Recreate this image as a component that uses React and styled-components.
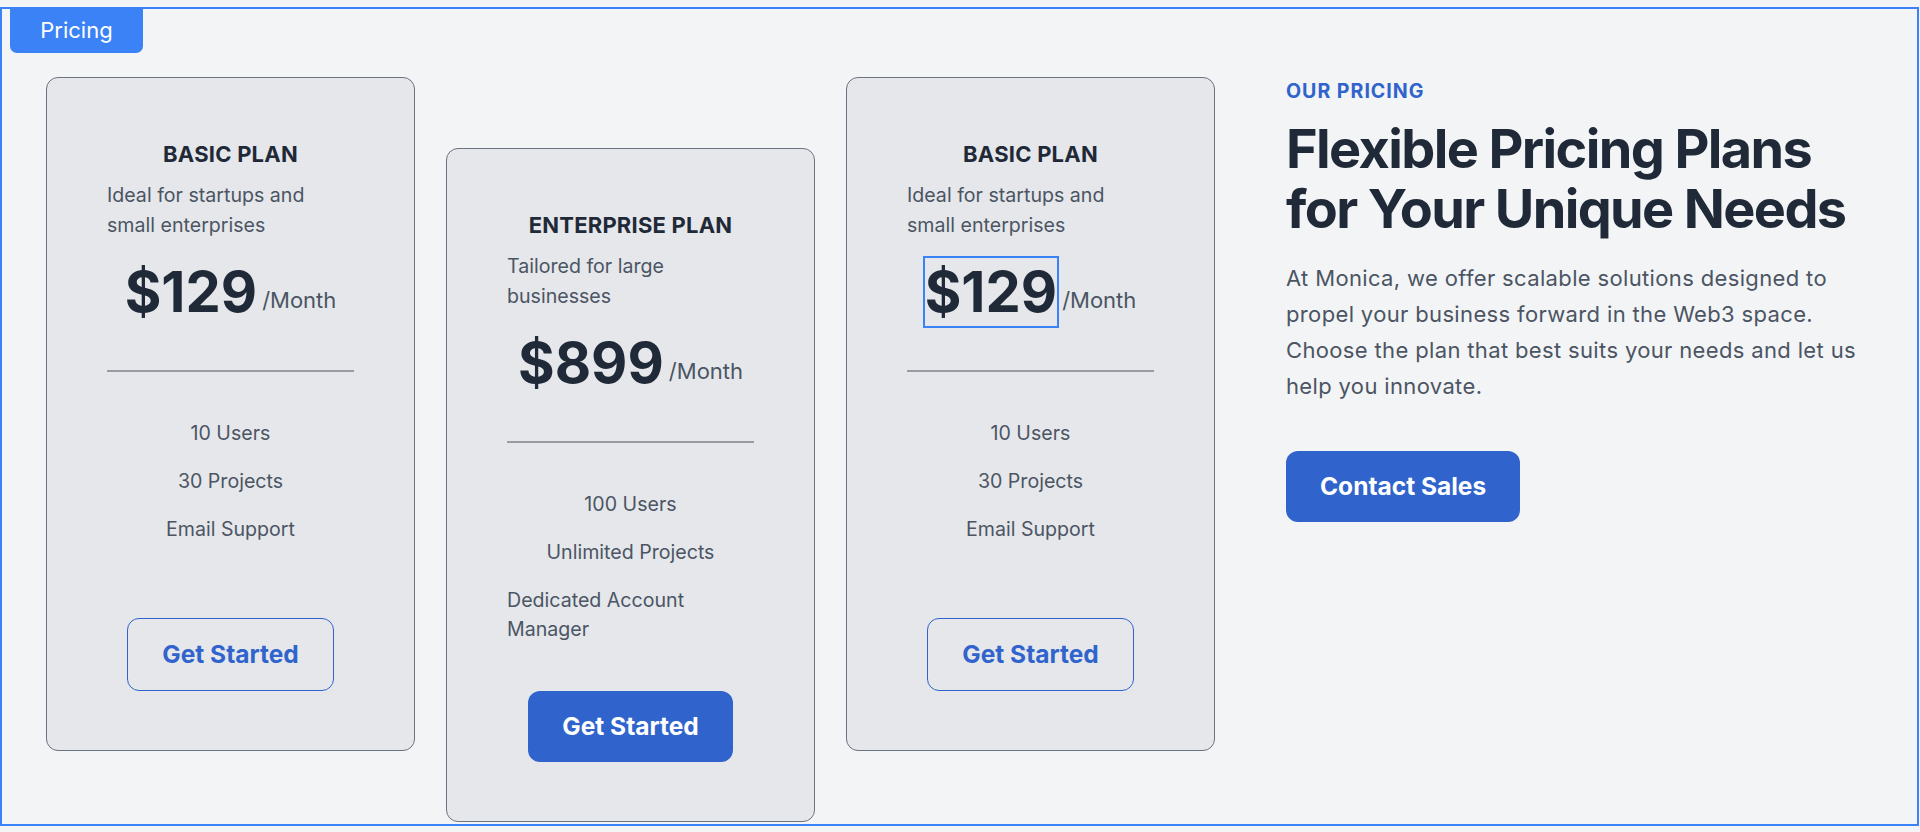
import React from "react";
import styled, { createGlobalStyle } from "styled-components";

const GlobalStyle = createGlobalStyle`
  * {
    box-sizing: border-box;
  }
  body {
    margin: 0;
    background: #f3f4f6;
    font-family: Inter, "Liberation Sans", Arial, sans-serif;
    color: #1f2937;
  }
`;

const Page = styled.div`
  height: 832px;
  padding: 7px 1px 6px 0;
  overflow: hidden;
`;

const Frame = styled.section`
  position: relative;
  height: 100%;
  border: 2px solid #3b82f6;
  padding: 68px 0 0 44px;
  display: flex;
  align-items: flex-start;
  overflow: hidden;
`;

const Tab = styled.div`
  position: absolute;
  top: -2px;
  left: 8px;
  width: 133px;
  height: 46px;
  background: #3b82f6;
  color: #ffffff;
  border-radius: 0 0 7px 7px;
  display: flex;
  align-items: center;
  justify-content: center;
  font-size: 22px;
`;

const Cards = styled.div`
  display: flex;
  gap: 31px;
  align-items: flex-start;
`;

const Card = styled.div`
  width: 369px;
  height: 674px;
  margin-top: ${(p) => (p.$offset ? "71px" : "0")};
  background: #e5e7eb;
  border: 1px solid #6b7280;
  border-radius: 12px;
  padding: 60px 60px 59px;
  display: flex;
  flex-direction: column;
  align-items: center;
`;

const PlanName = styled.h3`
  margin: 0 0 9px;
  font-size: 22px;
  line-height: 33px;
  font-weight: 700;
  letter-spacing: 0.01em;
  text-transform: uppercase;
  color: #1f2937;
`;

const PlanText = styled.p`
  margin: 0 0 18px;
  font-size: 19.6px;
  line-height: 30px;
  color: #4b5563;
`;

const PriceRow = styled.div`
  display: flex;
  align-items: flex-end;
  margin-bottom: 44px;
`;

const Price = styled.span`
  display: inline-block;
  font-size: 56px;
  line-height: 68px;
  font-weight: 700;
  color: #1f2937;
  outline: ${(p) => (p.$selected ? "2px solid #3b82f6" : "none")};
`;

const Per = styled.span`
  margin: 0 0 9px 5px;
  font-size: 22px;
  line-height: 33px;
  color: #4b5563;
`;

const Divider = styled.hr`
  align-self: stretch;
  height: 2px;
  margin: 0 0 47px;
  border: 0;
  background: #9a9ca3;
`;

const Features = styled.ul`
  list-style: none;
  margin: 0;
  padding: 0;
  display: flex;
  flex-direction: column;
  align-items: center;
  gap: 18.5px;
`;

const Feature = styled.li`
  font-size: 19.6px;
  line-height: 29.4px;
  color: #4b5563;
`;

const Button = styled.button`
  margin-top: ${(p) => (p.$pushed ? "auto" : "0")};
  padding: 17px 34px;
  border-radius: 12px;
  border: ${(p) => (p.$outline ? "1px solid #3064cc" : "0")};
  background: ${(p) => (p.$outline ? "transparent" : "#3064cc")};
  color: ${(p) => (p.$outline ? "#3064cc" : "#ffffff")};
  font-family: inherit;
  font-size: 24.5px;
  line-height: 36.7px;
  font-weight: 700;
  cursor: pointer;
`;

const Intro = styled.div`
  width: 592px;
  margin-left: 71px;
  display: flex;
  flex-direction: column;
  align-items: flex-start;
`;

const Eyebrow = styled.span`
  margin-bottom: 13px;
  font-size: 19.6px;
  line-height: 29.4px;
  font-weight: 700;
  letter-spacing: 0.05em;
  color: #3064cc;
`;

const Heading = styled.h2`
  margin: 0 0 23px;
  font-size: 54px;
  line-height: 59.4px;
  font-weight: 700;
  letter-spacing: -0.03em;
  color: #1f2937;
`;

const Lead = styled.p`
  margin: 0 0 47px;
  font-size: 22px;
  line-height: 35.8px;
  letter-spacing: 0.016em;
  color: #4b5563;
`;

const plans = [
  {
    name: "Basic Plan",
    text: "Ideal for startups and small enterprises",
    price: "$129",
    features: ["10 Users", "30 Projects", "Email Support"],
  },
  {
    name: "Enterprise Plan",
    text: "Tailored for large businesses",
    price: "$899",
    features: ["100 Users", "Unlimited Projects", "Dedicated Account Manager"],
    featured: true,
  },
  {
    name: "Basic Plan",
    text: "Ideal for startups and small enterprises",
    price: "$129",
    features: ["10 Users", "30 Projects", "Email Support"],
    selected: true,
  },
];

const App = () => {
  return (
    <Page>
      <GlobalStyle />
      <Frame>
        <Tab>Pricing</Tab>
        <Cards>
          {plans.map((plan, i) => (
            <Card key={i} $offset={plan.featured}>
              <PlanName>{plan.name}</PlanName>
              <PlanText>{plan.text}</PlanText>
              <PriceRow>
                <Price $selected={plan.selected}>{plan.price}</Price>
                <Per>/Month</Per>
              </PriceRow>
              <Divider />
              <Features>
                {plan.features.map((f) => (
                  <Feature key={f}>{f}</Feature>
                ))}
              </Features>
              <Button $pushed $outline={!plan.featured}>
                Get Started
              </Button>
            </Card>
          ))}
        </Cards>
        <Intro>
          <Eyebrow>OUR PRICING</Eyebrow>
          <Heading>Flexible Pricing Plans for Your Unique Needs</Heading>
          <Lead>
            At Monica, we offer scalable solutions designed to propel your
            business forward in the Web3 space.
            <br />
            Choose the plan that best suits your needs and let us help you
            innovate.
          </Lead>
          <Button>Contact Sales</Button>
        </Intro>
      </Frame>
    </Page>
  );
};

export default App;
